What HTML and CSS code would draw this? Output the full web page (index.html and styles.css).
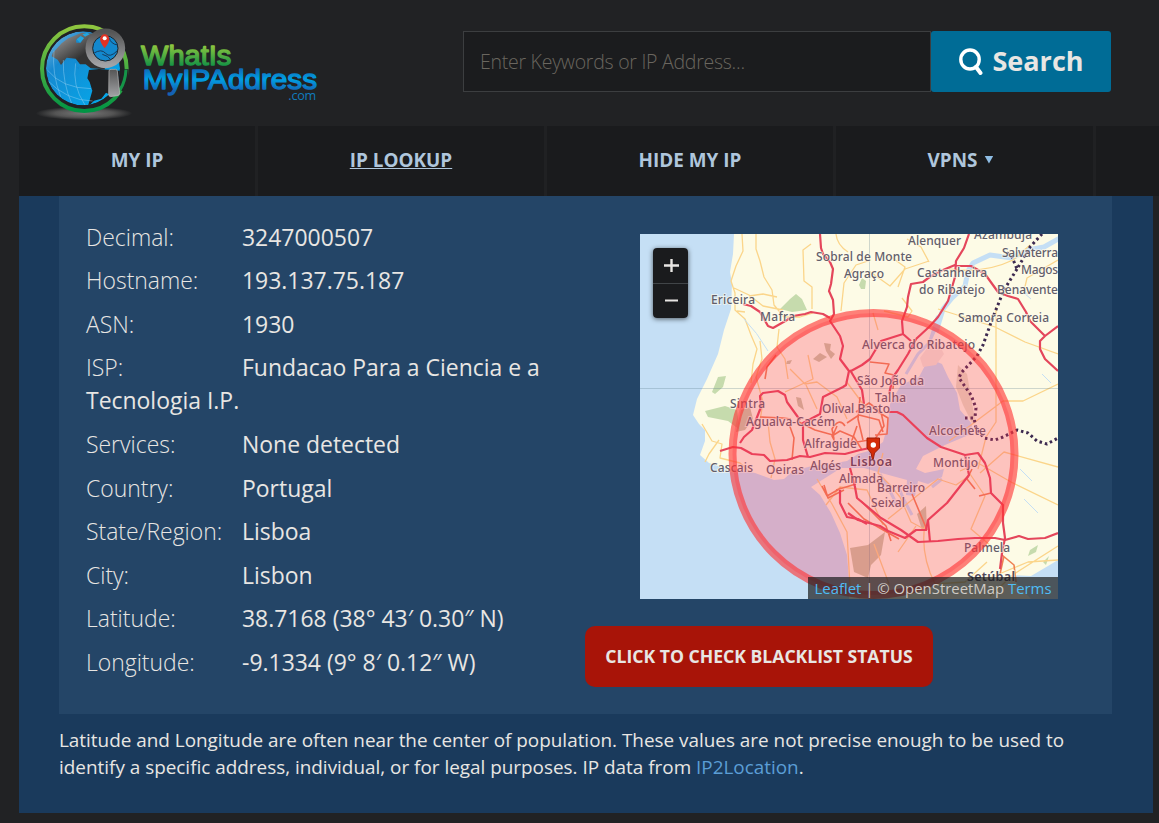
FILE: index.html
```html
<!DOCTYPE html>
<html lang="en">
<head>
<meta charset="utf-8">
<title>IP Lookup</title>
<link rel="stylesheet" href="styles.css">
</head>
<body>
<div class="page">
<header class="header">
  <a class="logo">
    <svg width="310" height="112" viewBox="0 0 930 336">
      <defs>
        <linearGradient id="ring" x1="0" y1="0" x2="0" y2="1"><stop offset="0" stop-color="#8fc63f"/><stop offset="1" stop-color="#009444"/></linearGradient>
        <linearGradient id="green" x1="0" y1="0" x2="0" y2="1"><stop offset=".2" stop-color="#8bc53f"/><stop offset=".85" stop-color="#149245"/></linearGradient>
        <linearGradient id="blue" x1="0" y1="0" x2="0" y2="1"><stop offset=".15" stop-color="#0f66b4"/><stop offset=".5" stop-color="#00a0e3"/><stop offset=".9" stop-color="#1462b4"/></linearGradient>
        <linearGradient id="land" x1="0" y1="0" x2="1" y2="1"><stop offset="0" stop-color="#aaa"/><stop offset=".6" stop-color="#333"/></linearGradient>
        <linearGradient id="sea" x1="0" y1="0" x2="1" y2="1"><stop offset="0" stop-color="#8bbbe0"/><stop offset=".3" stop-color="#1689d0"/><stop offset="1" stop-color="#00aeef"/></linearGradient>
        <linearGradient id="metal" x1="0" y1="0" x2="0" y2="1"><stop offset="0" stop-color="#555"/><stop offset="1" stop-color="#a2a3a6"/></linearGradient>
        <radialGradient id="shadow"><stop offset="0" stop-color="#777"/><stop offset=".6" stop-color="#555"/><stop offset="1" stop-color="#222325"/></radialGradient>
        <clipPath id="globe"><circle cx="189" cy="175" r="111"/></clipPath>
      </defs>
      <ellipse cx="192" cy="310" rx="144" ry="20" fill="url(#shadow)"/>
      <circle cx="193" cy="176" r="127" fill="#212224" stroke="url(#ring)" stroke-width="12"/>
      <g clip-path="url(#globe)">
        <circle cx="189" cy="175" r="111" fill="url(#sea)"/>
        <path d="M98 129l27-29 20-15 40-17 60 5 10 105-43-3-15-12-17 0-13-17-27-3-17 22-10-16-18-10z" fill="url(#land)"/>
        <path d="M207 180l30-3 68 6v90l-47-25-14 18-22 6-19 19 14-49-8-26-7-11z" fill="#202123"/>
        <path d="M168 90l12-10 12 4-10 14-13 0zM160 158l10 4-6 10 14-2-2 9M185 155l12-2" fill="#168bd0"/>
        <path d="M82 180Q125 235 213 236M81 210Q140 272 218 273M130 150Q128 220 155 280M167 160Q155 225 195 285M102 122Q95 190 122 260" fill="none" stroke="#8ccdf0" stroke-width="1.5"/>
        <path d="M170 88l12-10 10 6-12 14zM187 73l14-5 8 5-14 7z" fill="#21a5df"/>
      </g>
      <path d="M301 176L326 178 322 243 304 243z" fill="#212224"/>
      <path d="M318 179q-2 36-18 61" fill="none" stroke="#159548" stroke-width="9"/>
      <circle cx="256" cy="115" r="49" fill="#1388cd" stroke="url(#metal)" stroke-width="21"/>
      <circle cx="256" cy="115" r="38" fill="none" stroke="#222" stroke-width="3"/>
      <path d="M221 130q23-15 36 0t35-8M267 83q6 20 27 22M273 150q-8-13-26-17" fill="none" stroke="#173b5c" stroke-width="3"/>
      <path d="M254 115Q240 97 240 87a14 14 0 0 1 28 0Q268 97 254 115" fill="#e23324"/><circle cx="254" cy="85" r="6" fill="#fff"/>
      <path d="M267 183q0-5 6-5l14 0q4 0 5 5l7 66q0 8-8 8l-19 3q-6 0-6-7z" fill="url(#metal)" stroke="#bbb" stroke-width="2"/>
      <text class="logo-text" x="363" y="164" textLength="271" lengthAdjust="spacingAndGlyphs" font-size="83" fill="url(#green)" stroke="url(#green)">WhatIs</text>
      <text class="logo-text" x="368" y="236" textLength="523" lengthAdjust="spacingAndGlyphs" font-size="83" fill="url(#blue)" stroke="url(#blue)">MyIPAddress</text>
      <text class="logo-com" x="805" y="270" textLength="84" fill="#107bbd">.com</text>
    </svg>
  </a>
  <form class="search">
    <input class="search-input" placeholder="Enter Keywords or IP Address...">
    <button class="search-button" type="button">
      <svg width="24" height="28" viewBox="0 0 24 28" fill="none" stroke="#fff"><ellipse cx="11" cy="11.5" rx="9.2" ry="9.5" stroke-width="3.4"/><path d="M17 19l4.500 6" stroke-width="4" stroke-linecap="round"/></svg>
      <span>Search</span>
    </button>
  </form>
</header>
<nav class="nav">
  <a>MY IP</a><a class="active">IP LOOKUP</a><a>HIDE MY IP</a><a class="vpns">VPNS <span class="caret"></span></a><a></a>
</nav>
<main class="main">
  <section class="card">
    <div class="details">
      <p><span>Decimal:</span>3247000507</p>
      <p><span>Hostname:</span>193.137.75.187</p>
      <p><span>ASN:</span>1930</p>
      <p><span>ISP:</span>Fundacao Para a Ciencia e a Tecnologia I.P.</p>
      <p><span>Services:</span>None detected</p>
      <p><span>Country:</span>Portugal</p>
      <p><span>State/Region:</span>Lisboa</p>
      <p><span>City:</span>Lisbon</p>
      <p><span>Latitude:</span>38.7168 (38° 43′ 0.30″ N)</p>
      <p><span>Longitude:</span>-9.1334 (9° 8′ 0.12″ W)</p>
    </div>
    <div class="side">
      <div class="map">
        <svg class="map-art" width="418" height="365" viewBox="0 0 418 365">
          <rect width="418" height="365" fill="#fdfbe6"/>
          <path class="water" d="M0 0H94L93 20 90 38 92 50 91 75 84 96 78 120 67 145 57 165 53 181 59 190 65 196 65 207 60 221 69 229 86 234 115 239 134 246 144 245 153 237 172 232 190 230 207 227 218 220 232 216 243 208 248 190 250 170 261 151 279 143 288 126 289 105 296 82 304 77 296 97 291 108 288 124 302 130 308 143 317 159 320 176 332 190 331 200 305 211 283 222 276 235 285 239 304 235 302 243 288 250 278 247 275 262 266 261 267 246 245 240 224 234 201 234 171 253 180 261 191 279 200 299 207 321 209 345 209 365H0z"/>
          <path class="river" d="M420 4L404 13 388 16 372 24 350 21 333 29 328 37 325 52 312 64 303 75 296 98"/>
          <path class="creek" d="M258 252l6 14 8 15M240 240l9 15 9 18M290 108l-12 12-12 20M302 245l-10 8"/>
          <path d="M290 110l-10 14 3 9 13-2 8-11-6-12z" fill="#f2e9d8"/>
          <path class="green" d="M140 75l10-10 6-5 6 5 5 11-15 2zM72 158l6-15 8-1-3 11-8 7zM65 177l20-5 12 4 3 20-12-9-20-4zM222 44l4 3-1 8-4 0-2-4zM390 316l8-5-2 7-8 4zM403 328l6-6-3 9z"/>
          <path class="wood" d="M101 176l9-3 3 12-8 11-9 2zM173 125l7-6 7 4-8 5zM184 109l7 1-1 6 5 4-4 5-5-8zM210 314l18-3 17-13-4 23-10 10-3 13-14-6zM277 280l9-8 1 25-5-1zM147 127l5-1-2 4-4 0zM156 163l5 1 3 12-6-4z"/>
          <path class="marsh" d="M318 131l9 9 8 46-3 3-9-18-7-18z"/>
          <path class="water" d="M369 341l22 1 17-10 10-6v39h-27z"/>
          <g class="minor">
            <path d="M102 0l1 17-7 15-5 15 4 12 0 17 10 9 6 16 6 14-4 15-2 19M116 0l0 15 4 12 4 16 8 13 2 15 10 12 16 0 13-4M171 10l-8 6 1 31 8 6 0 22M94 54l15 7 14 11 20 4M137 63l-14-3-14 2M139 95l-2 18 8 12 3 20M196 0q1 11 12 18M97 77l8 1M201 77l3-28 12-18 15-5M229 37l21 15 15-17 24-8M244 77l24 6 4-6-10-13M238 96l-5-17M298 75l29 9 28 9 30 15 33 12M356 73V188l-10 15-8 32M418 150l-35 17-20 0-40 30-14 10M258 53l7-20-18-13M289 28l-8-15-14-8M309 35q35 5 64-9l17-15M384 57l3-13 31-18"/>
            <path d="M62 190l10 17 10 3-2 14 20 5 10 9M79 206l-10 14-4 8M128 188l2 20 5 17-4 19M120 107l2 18-6 18 7 25-4 25M150 135l15 15 12-2 20 15 10 22M145 158l28-13-5-24M177 175l-11-24M226 174l-20-27M243 219l-5 20 12 12 10 12 11 25 15 8M186 271l14-18 27 3 16 35M177 245l15 25 15 28 3 55M234 310l15 40M285 290q-5 30 10 60l30-2 22-20M330 240l15 22-14 33 20 17M340 239l24-21 54 15M320 237l18-8 33 19 47 23M350 362l24-22 44-28M347 345l41-17 30-2M248 285l50-40 18 6 13-9M258 318l18-26"/>
          </g>
          <g class="orange-road">
            <path d="M120 183l23 1 8 1M149 190l5 14-2 22M197 192l-4 9-18-5-16-8M197 212l-5-10 8-5 14 6 8 13M205 192q-6-9-13 3l2 10M207 189l12-8 20 5 4 12M217 192l-6 17 24-4 9-13-3-14-12-9-13 9M220 163l-2 22 5 21M230 128l19 2-4 9 9 2-1 14M235 176l13 8-1 16-12 1M182 252l5 10 14-8M184 251l4 13 16-8M196 256l20-6M221 267l25 25 5 15M208 269l16 16 35 20M272 260l15 36M125 145l2-12 9-12M364 322l-4 18M362 321l12 10 2 17M332 235l-5 10 8 10M339 262l12-3"/>
          </g>
          <g class="major">
            <path d="M180 0L181 14 183 20 190 28 193 35 191 50 189 57 193 66 194 80 190 87 200 102 203 112 200 125 209 137 206 151 203 153 183 163 180 180 163 189 163 206 168 223"/>
            <path d="M103 70L111 72 120 78 128 92 133 94 140 90 147 86 153 82 165 80 171 78 183 80 190 84M329 0L324 14 316 27 315 43 308 67 298 83 289 93 276 105 268 120 258 136 253 143 249 160M315 31L303 36 291 42 283 48 271 50 268 63 267 73 262 87 263 100 271 107M263 100L241 107 236 115 230 125 222 131 211 137 209 137"/>
            <path d="M315 32L331 32 340 37 345 40 358 58 368 62 378 65 386 78 390 87 405 102 418 92M405 102L400 107 400 115 405 125 418 137"/>
            <path d="M100 209L104 203 112 196 121 173 120 162 123 159 138 157 145 161 147 168 160 186M80 217L93 213 101 214 112 220 124 221 130 227 147 226 160 222 170 223 185 219 205 220 220 216 230 214"/>
            <path d="M210 136L222 156 224 170M247 178L257 178 263 181 287 204 301 213 325 221 338 219 345 229 350 244 351 259 363 271 363 289 365 304 362 319 360 335M325 221L329 241 307 269 288 286 286 296 276 296 265 304 248 297 240 292 218 286 208 279"/>
            <path d="M210 234L215 253 217 264 241 284 261 296 278 308 298 307 318 305 335 304 355 304 365 306 379 302 388 305 405 304 418 299M200 256L200 269 207 283 218 285 227 290M288 286L290 308"/>
          </g>
          <path d="M402 0L390 13 377 35 372 23 365 17M377 35L364 56 353 83 343 111 337 122 321 139 319 144 331 161 336 174 335 183M325 184L334 184 336 194 344 204 355 206 363 203 377 196 388 199 397 207 407 210 418 204" class="border-road"/>
          <path d="M380 53l8 7-4-1 7 6M380 235l12 12M384 265l14 14M402 140l9 9M104 85q13 13 24 32" stroke="#c5dff4" fill="none"/>
          <path d="M0 154.5H418M229.500 0V365" stroke="#58798a" stroke-width=".7" opacity=".4"/>
          <g class="places">
            <text x="71" y="70" textLength="44">Ericeira</text><text x="120" y="87" textLength="35">Mafra</text><text x="176" y="27" textLength="96">Sobral de Monte</text><text x="204" y="44" textLength="40">Agraço</text><text x="268" y="11" textLength="53">Alenquer</text><text x="334" y="5" textLength="58">Azambuja</text><text x="362" y="23" textLength="56">Salvaterra</text><text x="381" y="40" textLength="37">Magos</text><text x="277" y="43" textLength="70">Castanheira</text><text x="279" y="60" textLength="66">do Ribatejo</text><text x="357" y="60" textLength="61">Benavente</text><text x="318" y="88" textLength="91">Samora Correia</text>
            <text x="222" y="115" textLength="113">Alverca do Ribatejo</text><text x="217" y="151" textLength="67">São João da</text><text x="235" y="168" textLength="31">Talha</text><text x="182" y="179" textLength="68">Olival Basto</text><text x="90" y="174" textLength="35">Sintra</text><text x="106" y="192" textLength="89">Agualva-Cacém</text><text x="164" y="214" textLength="53">Alfragide</text><text x="289" y="201" textLength="57">Alcochete</text><text x="70" y="238" textLength="43">Cascais</text><text x="126" y="240" textLength="38">Oeiras</text><text x="170" y="236" textLength="31">Algés</text><text class="city" x="210" y="232" textLength="42">Lisboa</text><text x="293" y="233" textLength="45">Montijo</text><text x="199" y="249" textLength="44">Almada</text><text x="237" y="258" textLength="48">Barreiro</text><text x="231" y="273" textLength="34">Seixal</text><text x="324" y="318" textLength="46">Palmela</text><text class="city" x="327" y="347" textLength="48">Setúbal</text>
          </g>
          <circle cx="233.500" cy="220" r="141" fill="#f35" fill-opacity=".28" stroke="#f33" stroke-width="8" stroke-opacity=".62"/>
          <path d="M227 204h12.500v10l-5 5-1.200 6h-1l-1.300-6-4-5z" fill="#d42c08" stroke="#9d1d09"/><circle cx="233.300" cy="211" r="2.700" fill="#fff"/>
        </svg>
        <div class="zoom">
          <button aria-label="Zoom in"><svg width="15" height="15" viewBox="0 0 15 15"><path d="M7.500 1v13M0 7.500h15"/></svg></button>
          <button aria-label="Zoom out"><svg width="15" height="15" viewBox="0 0 15 15"><path d="M1 7.500h13"/></svg></button>
        </div>
        <div class="credit"><a>Leaflet</a> | © OpenStreetMap <a>Terms</a></div>
      </div>
      <a class="blacklist">CLICK TO CHECK BLACKLIST STATUS</a>
    </div>
  </section>
  <p class="note">Latitude and Longitude are often near the center of population. These values are not precise enough to be used to identify a specific address, individual, or for legal purposes. IP data from <a>IP2Location</a>.</p>
</main>
</div>
</body>
</html>
```
FILE: styles.css
```css
* { box-sizing: border-box; }
body { margin: 0; background: #212224; color: #e8e6e3; font-family: "Open Sans", sans-serif; }
.page { height: 823px; padding: 0 6px 10px 19px; display: flex; flex-direction: column; overflow: hidden; }
.header { height: 126px; padding: 10px 42px 0 1px; display: flex; justify-content: space-between; }
.logo svg { display: block; }
.logo-text { font-family: "Liberation Sans", sans-serif; stroke-width: 4; stroke-linejoin: round; }
.logo-com { font-family: "Open Sans", sans-serif; font-size: 38px; }
.search { display: flex; width: 648px; height: 61px; margin-top: 21px; }
.search-input { width: 468px; border: 1px solid #3c3e40; background: #1b1c1e; padding: 0 16px; font: 300 19.500px "Open Sans", sans-serif; letter-spacing: -.26px; color: #e8e6e3; outline: 0; }
.search-input::placeholder { color: #6a665f; opacity: 1; }
.search-button { width: 180px; border: 0; border-radius: 3px; background: #006c96; color: #e8e6e3; display: flex; align-items: center; justify-content: center; gap: 9px; padding: 0 0 2px 1px; font: 700 27px "Open Sans", sans-serif; }
.search-button svg { margin-top: 2px; }
.nav { width: 1140px; height: 70px; display: grid; grid-template-columns: 236px 286px 286px 257px 1fr; gap: 3px; background: #202123; flex: none; }
.nav a { background: #1a1b1d; color: #afc6dc; font-weight: 700; font-size: 18.900px; display: flex; align-items: center; justify-content: center; padding-bottom: 3px; }
.nav .active { text-decoration: underline; }
.nav .vpns { padding-right: 8px; }
.caret { width: 9px; height: 8px; margin-left: 7px; background: #8fbde4; clip-path: polygon(0 0, 100% 0, 50% 100%); }
.main { flex: 1; background: #1a3a5c; padding: 0 41px 0 40px; }
.card { height: 518px; background: #244567; display: flex; padding-left: 27px; }
.details { width: 480px; padding-top: 24.600px; font-size: 22.950px; line-height: 33.100px; }
.details p { margin: 0 0 10.500px; }
.details span { display: inline-block; width: 156px; font-weight: 300; }
.side { flex: 1; padding: 38px 0 0 19px; }
.map { position: relative; width: 418px; height: 365px; margin-left: 55px; overflow: hidden; }
.map-art { display: block; }
.water { fill: #c5dff5; }
.river, .creek { fill: none; stroke: #c5dff5; stroke-width: 5; stroke-linejoin: round; }
.creek { stroke-width: 3; }
.green { fill: #c6dbad; }
.wood { fill: #b9b68c; opacity: .75; }
.marsh { fill: #dcd6b5; opacity: .7; }
.minor, .orange-road, .major, .border-road { fill: none; stroke-linejoin: round; }
.minor { stroke: #fbd58a; stroke-width: 1.300px; }
.orange-road { stroke: #ef8254; stroke-width: 1.600px; }
.major { stroke: #e4465b; stroke-width: 2.200px; }
.border-road { stroke: #3d2a50; stroke-width: 3; stroke-dasharray: 2.500 3; }
.places { font: 500 12px "Noto Sans", sans-serif; fill: #625e6a; stroke: #fffbed; stroke-opacity: .6; stroke-width: 2px; paint-order: stroke; }
.places .city { font-weight: 600; fill: #50485a; font-size: 12.600px; }
.zoom { position: absolute; left: 13px; top: 14px; width: 35px; height: 70px; border-radius: 4px; overflow: hidden; box-shadow: 0 1px 5px #0009; display: flex; flex-direction: column; }
.zoom button { flex: 1; border: 0; padding: 0 0 0 1px; background: #1a1b1d; display: flex; align-items: center; justify-content: center; }
.zoom button:first-child { border-bottom: 1px solid #414548; }
.zoom path { stroke: #e8e6e3; stroke-width: 2.400px; }
.zoom button + button path { stroke-width: 2px; }
.credit { position: absolute; right: 0; bottom: 0; width: 250px; height: 22px; background: rgba(24, 26, 27, .7); font-size: 14.900px; line-height: 22px; text-align: center; white-space: nowrap; color: #d0ccc6; }
.credit a { color: #4fbdf5; }
.blacklist { display: flex; width: 348px; height: 61px; margin-top: 27px; padding-bottom: 2px; align-items: center; justify-content: center; border-radius: 10px; background: #a81408; font-size: 17.600px; font-weight: 700; }
.note { margin: 13px 0 0; font-size: 18.900px; line-height: 27px; }
.note a { color: #5b9ed6; }
```
